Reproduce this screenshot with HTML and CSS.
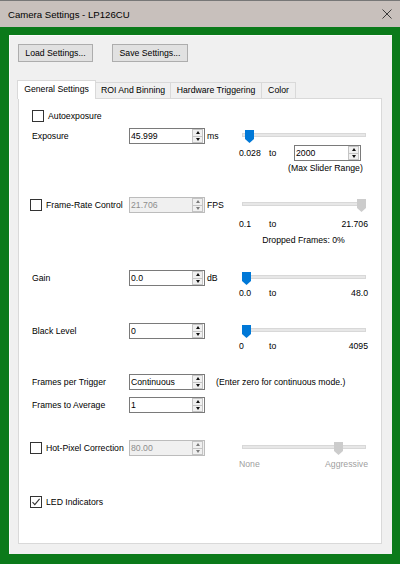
FILE: index.html
```html
<!DOCTYPE html>
<html>
<head>
<meta charset="utf-8">
<title>Camera Settings - LP126CU</title>
<link rel="stylesheet" href="styles.css">
</head>
<body>
<div class="window">
  <div class="titlebar">
    <span class="title">Camera Settings - LP126CU</span>
    <svg class="close" width="10" height="10" viewBox="0 0 10 10"><path d="M0.5 0.5L9.5 9.5M9.5 0.5L0.5 9.5" stroke="#2a2a2a" stroke-width="0.9" fill="none"/></svg>
  </div>
  <div class="frame">
    <div class="client">
      <div class="toolbar">
        <button class="btn btn-load">Load Settings...</button>
        <button class="btn btn-save">Save Settings...</button>
      </div>
      <div class="tabs">
        <div class="tab tab-general active">General Settings</div>
        <div class="tab tab-roi">ROI And Binning</div>
        <div class="tab tab-hw">Hardware Triggering</div>
        <div class="tab tab-color">Color</div>
      </div>
      <div class="tabpanel">
        <div class="check-row autoexp"><span class="cb"></span><span>Autoexposure</span></div>

        <section class="sec sec-exposure">
          <div class="lbl">Exposure</div>
          <div class="spin"><span class="val">45.999</span><span class="arrows"><i class="up"></i><i class="down"></i></span></div>
          <div class="unit">ms</div>
          <div class="slidercol">
            <div class="slider"><div class="track"></div><svg class="thumb" style="left:5.6px" width="9" height="13" viewBox="0 0 9 13"><polygon points="0,0 9,0 9,9 4.5,13 0,9" fill="#0078d7"/></svg></div>
            <div class="range range-exp"><span class="rmin">0.028</span><span class="rto">to</span><div class="spin spin-max"><span class="val">2000</span><span class="arrows"><i class="up"></i><i class="down"></i></span></div></div>
            <div class="note">(Max Slider Range)</div>
          </div>
        </section>

        <section class="sec sec-fps">
          <div class="lbl check"><span class="cb"></span><span>Frame-Rate Control</span></div>
          <div class="spin disabled"><span class="val">21.706</span><span class="arrows"><i class="up"></i><i class="down"></i></span></div>
          <div class="unit">FPS</div>
          <div class="slidercol">
            <div class="slider"><div class="track"></div><svg class="thumb" style="left:118px" width="9" height="13" viewBox="0 0 9 13"><polygon points="0,0 9,0 9,9 4.5,13 0,9" fill="#cccccc"/></svg></div>
            <div class="range range-fps"><span class="rmin">0.1</span><span class="rto">to</span><span class="rmax">21.706</span></div>
            <div class="dropped">Dropped Frames: 0%</div>
          </div>
        </section>

        <section class="sec sec-gain">
          <div class="lbl">Gain</div>
          <div class="spin"><span class="val">0.0</span><span class="arrows"><i class="up"></i><i class="down"></i></span></div>
          <div class="unit">dB</div>
          <div class="slidercol">
            <div class="slider"><div class="track"></div><svg class="thumb" style="left:3px" width="9" height="13" viewBox="0 0 9 13"><polygon points="0,0 9,0 9,9 4.5,13 0,9" fill="#0078d7"/></svg></div>
            <div class="range range-tight"><span class="rmin">0.0</span><span class="rto">to</span><span class="rmax">48.0</span></div>
          </div>
        </section>

        <section class="sec sec-black">
          <div class="lbl">Black Level</div>
          <div class="spin"><span class="val">0</span><span class="arrows"><i class="up"></i><i class="down"></i></span></div>
          <div class="unit"></div>
          <div class="slidercol">
            <div class="slider"><div class="track"></div><svg class="thumb" style="left:3px" width="9" height="13" viewBox="0 0 9 13"><polygon points="0,0 9,0 9,9 4.5,13 0,9" fill="#0078d7"/></svg></div>
            <div class="range range-tight"><span class="rmin">0</span><span class="rto">to</span><span class="rmax">4095</span></div>
          </div>
        </section>

        <section class="sec sec-fpt">
          <div class="lbl">Frames per Trigger</div>
          <div class="spin"><span class="val">Continuous</span><span class="arrows"><i class="up"></i><i class="down"></i></span></div>
          <div class="hint">(Enter zero for continuous mode.)</div>
        </section>

        <section class="sec sec-fta">
          <div class="lbl">Frames to Average</div>
          <div class="spin"><span class="val">1</span><span class="arrows"><i class="up"></i><i class="down"></i></span></div>
        </section>

        <section class="sec sec-hot">
          <div class="lbl check"><span class="cb"></span><span>Hot-Pixel Correction</span></div>
          <div class="spin disabled"><span class="val">80.00</span><span class="arrows"><i class="up"></i><i class="down"></i></span></div>
          <div class="unit"></div>
          <div class="slidercol">
            <div class="slider"><div class="track"></div><svg class="thumb" style="left:95px" width="9" height="13" viewBox="0 0 9 13"><polygon points="0,0 9,0 9,9 4.5,13 0,9" fill="#cccccc"/></svg></div>
            <div class="range range-hot"><span class="rmin">None</span><span class="rmax">Aggressive</span></div>
          </div>
        </section>

        <div class="check-row led"><span class="cb checked"><svg width="10" height="10" viewBox="0 0 10 10"><path d="M1.5 5.2L3.8 7.6L8.6 1.8" stroke="#333" stroke-width="1.1" fill="none"/></svg></span><span>LED Indicators</span></div>
      </div>
    </div>
  </div>
</div>
</body>
</html>
```

FILE: styles.css
```css
* { box-sizing: border-box; }
html, body { margin: 0; padding: 0; }
body {
  width: 400px;
  height: 564px;
  overflow: hidden;
  font-family: "Liberation Sans", Arial, sans-serif;
  font-size: 8.7px;
  color: #000;
  background: #0b7a1a;
}
.window { width: 400px; height: 564px; display: flex; flex-direction: column; }

.titlebar {
  height: 27px;
  flex: none;
  background: #c8c0bc;
  border-top: 1px solid #777;
  display: flex;
  align-items: center;
  justify-content: space-between;
  padding: 0 8px 0 8px;
}
.title { font-size: 9.6px; color: #000; }
.close { display: block; width: 10px; height: 10px; margin-top: 0; }

.frame {
  height: 537px;
  background: #0b7a1a;
  padding: 8px 8px 10px 9px;
}
.client {
  height: 519px;
  background: #f0f0f0;
  border-left: 1px solid #fafafa;
  border-top: 1px solid #fafafa;
  padding: 8px 0 0 8px;
}

.toolbar { display: flex; gap: 19px; height: 18px; }
.btn {
  height: 18px;
  padding: 0;
  margin: 0;
  font: inherit;
  color: #000;
  background: #e1e1e1;
  border: 1px solid #adadad;
  line-height: 16px;
  text-align: center;
}
.btn-load { width: 75px; }
.btn-save { width: 76px; }

.tabs {
  display: flex;
  align-items: flex-end;
  height: 18px;
  margin-top: 18px;
  margin-left: -1px;
}
.tab {
  height: 16px;
  border: 1px solid #d9d9d9;
  border-bottom: none;
  background: #f0f0f0;
  text-align: center;
  line-height: 15px;
  margin-left: -1px;
  white-space: nowrap;
}
.tab-general { width: 79px; margin-left: 0; }
.tab-roi { width: 76px; }
.tab-hw { width: 92px; }
.tab-color { width: 35px; }
.tab.active {
  height: 19px;
  margin-bottom: -1px;
  background: #fff;
  position: relative;
  z-index: 2;
  line-height: 17px;
}

.tabpanel {
  width: 364px;
  height: 446px;
  background: #fff;
  border: 1px solid #d9d9d9;
  padding: 11px 0 0 11px;
}

.cb {
  width: 12px;
  height: 12px;
  border: 1px solid #333;
  background: #fff;
  flex: none;
  display: flex;
  align-items: center;
  justify-content: center;
}
.check-row {
  display: flex;
  align-items: center;
  gap: 4px;
  height: 12px;
  line-height: 12px;
}
.autoexp { padding-left: 2px; }
.led { margin-top: 26px; }

.sec {
  display: grid;
  grid-template-columns: 99px 76px 34px 129px;
  align-items: start;
}
.lbl { line-height: 16px; height: 16px; padding-left: 2px; white-space: nowrap; }
.lbl.check { display: flex; align-items: center; gap: 4px; padding-left: 0; }
.unit { line-height: 16px; padding-left: 2px; }
.hint { grid-column: 3 / 5; line-height: 16px; padding-left: 11px; white-space: nowrap; }

.spin {
  width: 76px;
  height: 16px;
  border: 1px solid #7a7a7a;
  background: #fff;
  display: flex;
  align-items: stretch;
  justify-content: space-between;
}
.spin .val { line-height: 14px; padding-left: 1px; }
.spin .arrows {
  width: 11px;
  margin: 0 1px 0 0;
  display: flex;
  flex-direction: column;
}
.spin .arrows i {
  flex: 1;
  border: 1px solid #c4c4c4;
  background: #f0f0f0;
  display: flex;
  align-items: center;
  justify-content: center;
}
.spin .arrows i + i { border-top: none; }
.spin .arrows i::after {
  content: "";
  width: 0;
  height: 0;
  border-left: 2.5px solid transparent;
  border-right: 2.5px solid transparent;
}
.spin .arrows .up::after { border-bottom: 3px solid #111; }
.spin .arrows .down::after { border-top: 3px solid #111; }
.spin.disabled { border-color: #bcbcbc; background: #f0f0f0; }
.spin.disabled .val { color: #8d8d8d; }
.spin.disabled .arrows .up::after { border-bottom-color: #7a7a7a; }
.spin.disabled .arrows .down::after { border-top-color: #7a7a7a; }
.spin-max { width: 67px; }

.slidercol { grid-column: 4; }
.slider { position: relative; height: 16px; padding-top: 5px; }
.track {
  height: 4px;
  margin: 0 2px 0 3px;
  background: #e7e7e7;
  border: 1px solid #d8d8d8;
}
.thumb { position: absolute; top: 2px; display: block; }

.range { display: flex; align-items: center; line-height: 12px; height: 12px; white-space: nowrap; }
.rmin { width: 30px; }
.rmax { margin-left: auto; }
.range-exp { height: 16px; margin-top: 1px; }
.range-exp .rto { width: 25px; }
.range-fps { margin-top: 5px; }
.range-tight { margin-top: 1px; }
.range-hot { margin-top: 2px; color: #a0a0a0; }
.note { line-height: 12px; margin-top: 1px; padding-left: 49px; white-space: nowrap; }
.dropped { line-height: 12px; margin-top: 4px; text-align: center; white-space: nowrap; }

.sec-exposure { margin-top: 6px; }
.sec-fps { margin-top: 23px; }
.sec-gain { margin-top: 24px; }
.sec-black { margin-top: 24px; }
.sec-fpt { margin-top: 22px; }
.sec-fta { margin-top: 7px; }
.sec-hot { margin-top: 27px; }
```
